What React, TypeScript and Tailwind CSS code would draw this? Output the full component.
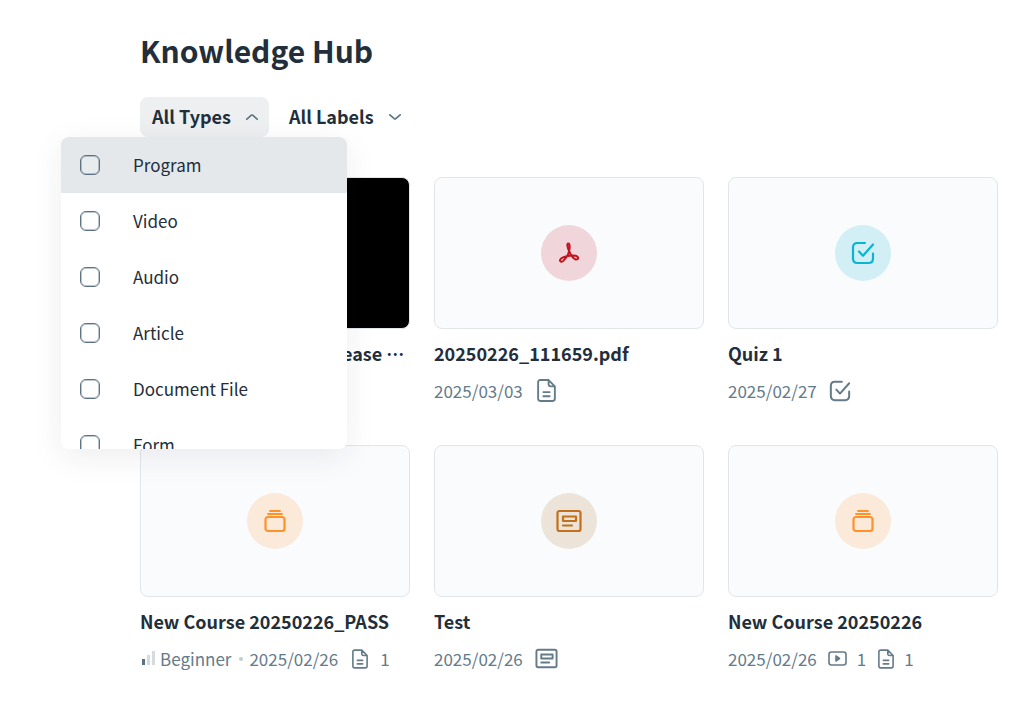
import React from 'react';

type IconProps = { className?: string };

const ChevronIcon = ({ className = '' }: IconProps) => (
  <svg viewBox="0 0 12 6" fill="none" stroke="currentColor" strokeWidth="1.6" strokeLinecap="round" strokeLinejoin="round" className={`w-3 h-[6px] text-[#5b7282] ${className}`}>
    <path d="M.8.8C2.5 2.2 4 3.6 5.4 4.8q.6.4 1.2 0C8 3.6 9.5 2.2 11.2.8" />
  </svg>
);

const PdfIcon = ({ className = '' }: IconProps) => (
  <svg viewBox="0 0 24 24" fill="none" stroke="currentColor" strokeWidth="2" strokeLinecap="round" strokeLinejoin="round" className={className}>
    <path d="M12.2 10.2C10.600 7 9.400 2.500 11.300 2.500C13.200 2.500 12.700 7 12.100 10.200C11.300 13.500 9 17.200 6.300 19.900C4.600 21.600 2.400 20.300 3.200 18.600C4.200 16.500 9.200 15.300 12.500 14.800C15.500 14.400 19.800 14.500 20.900 16.300C21.800 18 19.700 19.200 17.900 18.100C15.500 16.700 13.400 13.100 12.200 10.200Z" />
  </svg>
);

const QuizIcon = ({ className = '' }: IconProps) => (
  <svg viewBox="0 0 24 24" fill="none" stroke="currentColor" strokeWidth="2.200" strokeLinecap="round" strokeLinejoin="round" className={className}>
    <path d="M14 2H6.500C3.500 2 2 3.500 2 6.500V17.500C2 20.500 3.500 22 6.500 22H17.500C20.500 22 22 20.500 22 17.500V12.500" />
    <path d="M8 10.500 12 14.800 22 3.500" />
  </svg>
);

const CourseIcon = ({ className = '' }: IconProps) => (
  <svg viewBox="0 0 24 24" fill="none" stroke="currentColor" strokeLinecap="round" strokeLinejoin="round" className={className}>
    <path d="M7 2H17" strokeWidth="1.8" />
    <path d="M5 5H19" strokeWidth="1.8" />
    <rect x="2.500" y="8" width="19" height="14" rx="2.500" strokeWidth="2.200" />
  </svg>
);

const ArticleIcon = ({ className = '' }: IconProps) => (
  <svg viewBox="0 0 26 24" fill="none" stroke="currentColor" strokeWidth="2.200" strokeLinecap="round" strokeLinejoin="round" className={className}>
    <rect x="1.500" y="2" width="23" height="20" rx="2" />
    <rect x="7" y="7.500" width="13" height="4.500" />
    <path d="M7 16.500H16" />
  </svg>
);

const DocumentIcon = ({ className = '' }: IconProps) => (
  <svg viewBox="0 0 18 22" fill="none" stroke="currentColor" strokeWidth="1.8" strokeLinecap="round" strokeLinejoin="round" className={className}>
    <path d="M11 1H3Q1 1 1 3V19Q1 21 3 21H15Q17 21 17 19V7ZM11 1V5Q11 7 13 7H17" />
    <path d="M6 12.500H12M6 16.500H12" />
  </svg>
);

const VideoIcon = ({ className = '' }: IconProps) => (
  <svg viewBox="0 0 19 15" fill="none" stroke="currentColor" strokeWidth="1.6" strokeLinejoin="round" className={className}>
    <rect x="1" y="1" width="17" height="13" rx="2.500" />
    <path d="M8 5V10L11.500 7.500Z" fill="currentColor" />
  </svg>
);

const LevelIcon = ({ className = '' }: IconProps) => (
  <svg viewBox="0 0 16 16" className={className}>
    <rect x="2" y="8" width="3" height="6" fill="#5b7282" />
    <rect x="7" y="4" width="3" height="10" fill="#d5dbdf" />
    <rect x="12" y="0" width="3" height="14" fill="#d5dbdf" />
  </svg>
);

const types = ['Program', 'Video', 'Audio', 'Article', 'Document File', 'Form'];

const TypeMenu = () => (
  <div className="absolute top-full -left-[79px] z-10 h-[312px] w-[286px] overflow-hidden rounded-lg bg-white shadow-[0_8px_32px_rgba(34,44,56,0.08)]">
    {types.map((type, i) => (
      <label key={type} className={`flex h-14 items-center gap-[33px] pl-[19px] text-[17px] ${i === 0 ? 'bg-[#e4e8eb]' : ''}`}>
        <input type="checkbox" className="size-5 shrink-0 appearance-none rounded-md border border-[#5b7282] bg-white/20 shadow-[inset_0_0_0_1px_rgba(91,114,130,0.4)]" />
        {type}
      </label>
    ))}
  </div>
);

type CardProps = {
  title: string;
  tint?: string;
  icon?: React.ReactNode;
  children?: React.ReactNode;
};

const Card = ({ title, tint, icon, children }: CardProps) => (
  <article className="min-w-0">
    <div className={`flex aspect-video items-center justify-center rounded-lg border border-[#e1e6ea] ${icon ? 'bg-[#f9fbfd]' : 'bg-black'}`}>
      {icon && <div className={`flex size-14 items-center justify-center rounded-full ${tint}`}>{icon}</div>}
    </div>
    <h2 className="mt-[10px] truncate text-lg leading-7 font-bold">{title}</h2>
    <div className="mt-[10px] flex h-7 items-center text-[17px] text-[#647b8a]">{children}</div>
  </article>
);

const App = () => {
  return (
    <main className="min-h-screen bg-white pt-8 pr-[13px] pb-8 pl-[140px] font-['Noto_Sans_CJK_JP',sans-serif] text-[#222e3a]">
      <h1 className="text-3xl leading-9 font-bold">Knowledge Hub</h1>

      <div className="mt-[29px] flex gap-2">
        <div className="relative">
          <button type="button" aria-expanded="true" className="flex h-10 items-center gap-[15px] rounded-lg bg-[#edeff1] pr-[11px] pl-3 text-lg font-bold">
            <span className="pb-0.5">All Types</span>
            <ChevronIcon className="rotate-180" />
          </button>
          <TypeMenu />
        </div>
        <button type="button" aria-expanded="false" className="flex h-10 items-center gap-[15px] rounded-lg px-3 text-lg font-bold">
          <span className="pb-0.5">All Labels</span>
          <ChevronIcon />
        </button>
      </div>

      <section className="mt-10 grid grid-cols-3 gap-x-6 gap-y-10">
        <Card title="Product Audio New Release Notes" />
        <Card title="20250226_111659.pdf" tint="bg-[#f0d6da]" icon={<PdfIcon className="size-6 text-[#c01420]" />}>
          2025/03/03
          <DocumentIcon className="ml-[14px] h-[23px] w-[19px]" />
        </Card>
        <Card title="Quiz 1" tint="bg-[#d2eff5]" icon={<QuizIcon className="size-6 text-[#06b6d4]" />}>
          2025/02/27
          <QuizIcon className="ml-3 size-[22px]" />
        </Card>
        <Card title="New Course 20250226_PASS" tint="bg-[#fbe9da]" icon={<CourseIcon className="size-6 text-[#ff922b]" />}>
          <LevelIcon className="mr-1 size-4" />
          Beginner
          <span className="mr-[6px] ml-2 size-1 rounded-full bg-[#c3cdd4]" />
          2025/02/26
          <DocumentIcon className="mr-3 ml-[14px] h-5 w-4" />1
        </Card>
        <Card title="Test" tint="bg-[#ede4d9]" icon={<ArticleIcon className="h-6 w-[26px] text-[#c2701c]" />}>
          2025/02/26
          <ArticleIcon className="ml-3 h-[21px] w-[23px]" />
        </Card>
        <Card title="New Course 20250226" tint="bg-[#fbe9da]" icon={<CourseIcon className="size-6 text-[#ff922b]" />}>
          2025/02/26
          <VideoIcon className="mr-[10px] ml-[11px] h-[15px] w-[19px]" />1
          <DocumentIcon className="mr-[10px] ml-3 h-5 w-4" />1
        </Card>
      </section>
    </main>
  );
};

export default App;
